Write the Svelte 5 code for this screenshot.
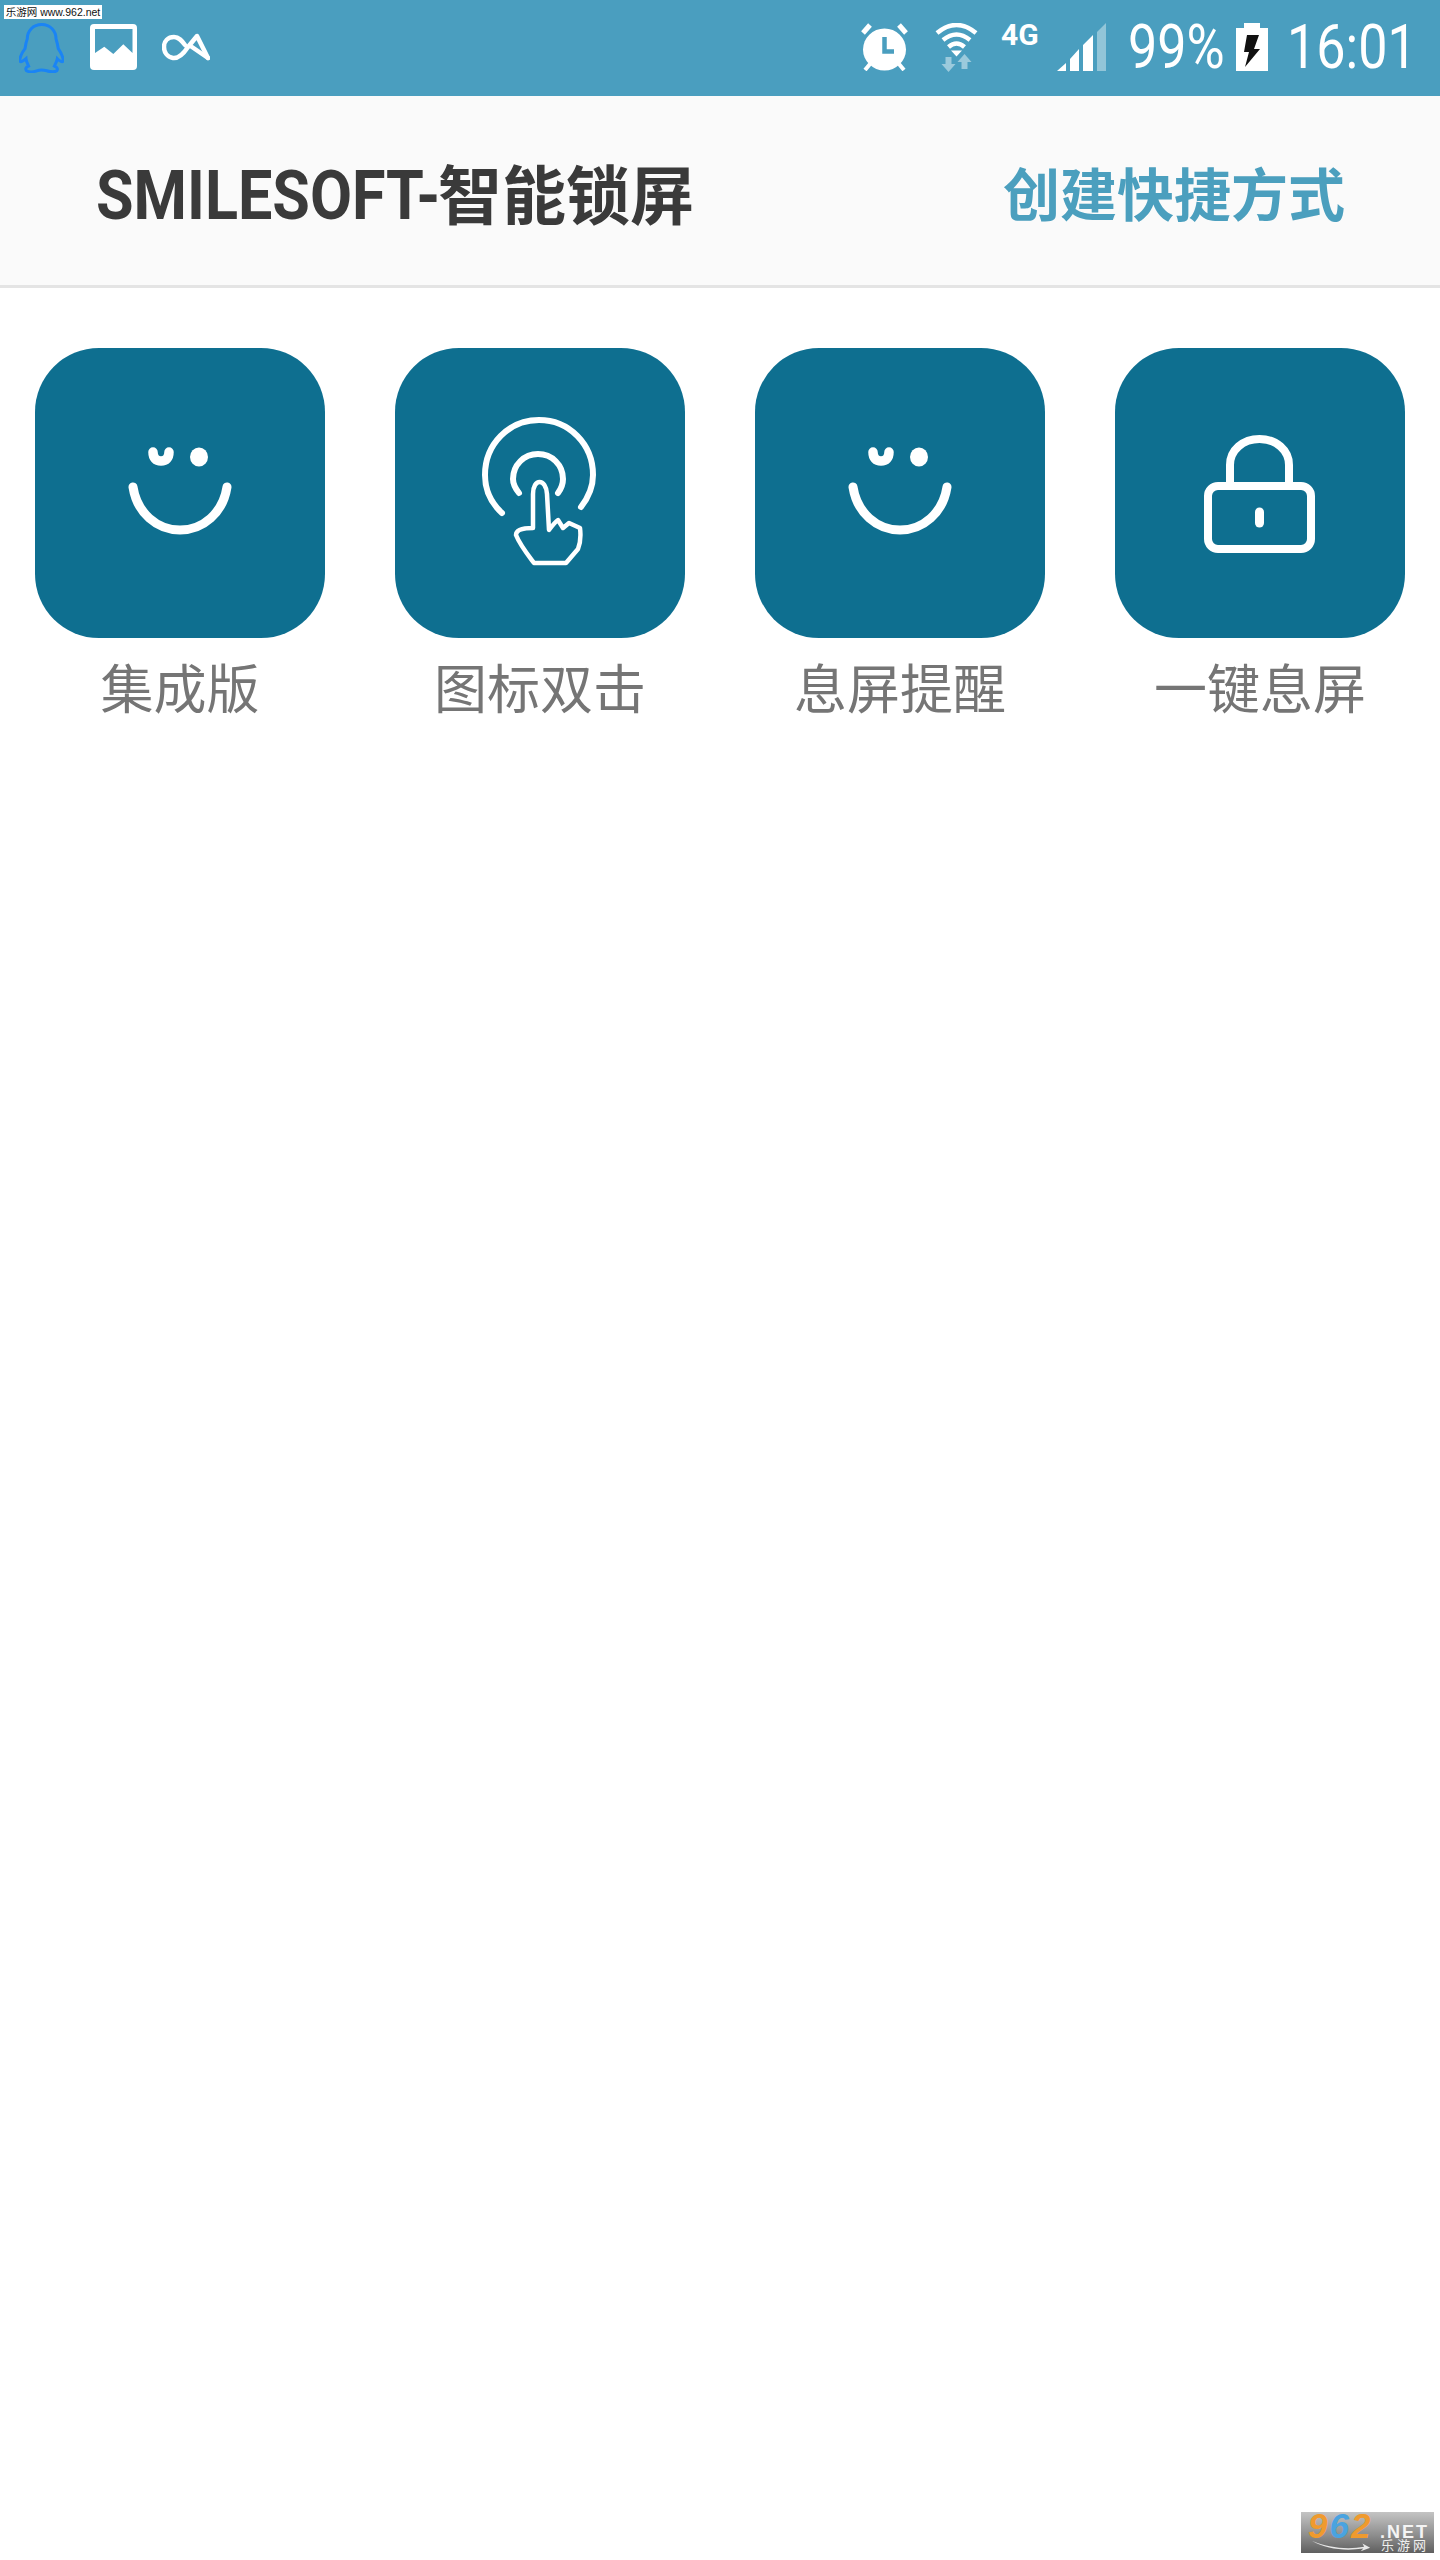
<script lang="ts">
  const tools = [
    { key: 'smile', label: '集成版' },
    { key: 'touch', label: '图标双击' },
    { key: 'smile', label: '息屏提醒' },
    { key: 'lock', label: '一键息屏' }
  ];
</script>

<div class="screen">
  <div class="status-bar">
    <div class="status-left">
      <svg class="qq" viewBox="0 0 45 50" width="45" height="50">
        <path d="M22.7 1.5C14 1.5 8.3 8 8.3 15.7C7 19 6.5 22 6 25.7C3.5 29 1 33 .8 37.5C1 40 4.5 38 7 35.7C7.2 38.5 8.5 41 9.5 43C7 44 6 46 7.5 47.8C10 49.3 15 48.8 17.7 47.8C20 47 25 47 27.7 47.8C31 48.8 35.5 49.3 37.8 47.8C39.2 46 38 44 35.5 43C36.5 41 37.8 38.5 38.3 35.7C40.5 38 44 40 44.3 37.5C44 33 41.5 29 39.3 25.7C38.8 22 38 19 37 15.7C37 8 31.4 1.5 22.7 1.5Z" fill="none" stroke="#1a84f5" stroke-width="3" />
      </svg>
      <svg class="picture" viewBox="0 0 47 46" width="47" height="46">
        <rect width="47" height="46" rx="4" fill="#fff" />
        <path d="M5 29L14.3 22.7L23.3 30L33.3 20.3L42.5 29V5H5Z" fill="#4a9ebf" />
      </svg>
      <svg class="ca" viewBox="0 0 48 28" width="48" height="28">
        <path d="M46 25L35 3L26 14C20 23 15 25.5 11 25C5 24 2 19 2 14C2 8 6 4 12 4C17 4 20 8 23 12" fill="none" stroke="#fff" stroke-width="4.5" stroke-linecap="round" stroke-linejoin="round" />
        <path d="M30 14L46 25" fill="none" stroke="#fff" stroke-width="4.5" stroke-linecap="round" />
      </svg>
    </div>
    <div class="status-right">
      <svg class="alarm" viewBox="0 0 47 48" width="47" height="48">
        <ellipse cx="23.5" cy="26.5" rx="21.5" ry="21" fill="#fff" />
        <path d="M2 10L9 2M45 10L38 2" stroke="#fff" stroke-width="5" />
        <path d="M4 47L9 41M43 47L38 41" stroke="#fff" stroke-width="4" />
        <path d="M23.5 14V28.5H33" fill="none" stroke="#4a9ebf" stroke-width="4.5" />
      </svg>
      <svg class="wifi" viewBox="0 0 43 49" width="43" height="49">
        <path d="M2 10Q21.5 -6 41 10M8 17Q21.5 6 35 17M13.5 24Q21.5 17 29.5 24" fill="none" stroke="#fff" stroke-width="4.5" />
        <path d="M16 27.5H27L21.5 33.5Z" fill="#fff" />
        <path d="M10.5 34H16.5V41H20.5L13.5 49L6.5 41H10.5ZM29.5 31L36.5 39H32.5V46H26.5V39H22.5Z" fill="#fff" opacity=".45" />
      </svg>
      <span class="net">4G</span>
      <svg class="signal" viewBox="0 0 49 48" width="49" height="48">
        <path d="M0 48L9 40V48ZM13 48V36L22 26V48ZM26 48V22L36 12V48Z" fill="#fff" />
        <path d="M40 48V9L49 0V48Z" fill="#fff" opacity=".4" />
      </svg>
      <span class="battery-text"><span>99%</span></span>
      <svg class="battery" viewBox="0 0 32 48" width="32" height="48">
        <path d="M8 0H24V5H32V48H0V5H8Z" fill="#fff" />
        <path d="M11 12H23L18 26H24L9 44L13 29H8Z" fill="#111" />
      </svg>
      <span class="clock"><span>16:01</span></span>
    </div>
    <div class="site-tag">乐游网 www.962.net</div>
  </div>

  <header class="app-header">
    <h1><span class="brand">SMILESOFT-</span>智能锁屏</h1>
    <span class="shortcut">创建快捷方式</span>
  </header>

  <div class="tool-grid">
    {#each tools as tool}
      <div class="tool">
        <div class="tile">
          <svg viewBox="0 0 290 290" width="290" height="290">
            {#if tool.key === 'smile'}
              <path d="M98 139C102 165 122 182 145 182C168 182 188 165 192 139" fill="none" stroke="#fff" stroke-width="9" stroke-linecap="round" />
              <path d="M118 104C118 110 121 113 126 113C131 113 134 110 134 104" fill="none" stroke="#fff" stroke-width="9.5" stroke-linecap="round" />
              <ellipse cx="164" cy="109" rx="9" ry="9.5" fill="#fff" />
            {:else if tool.key === 'touch'}
              <path d="M107 165C96 155 90 142 90 127C90 96 114 72 144 72C174 72 198 96 198 127C198 139 193 150 186 159" fill="none" stroke="#fff" stroke-width="6" stroke-linecap="round" />
              <path d="M124 145C120 140 118 136 118 131C118 117 129 106 143 106C157 106 168 117 168 131C168 136 166 141 163 145" fill="none" stroke="#fff" stroke-width="6" stroke-linecap="round" />
              <path d="M138 180V146C138 130 151 130 152 146L154 182C157 178 160 174 163 172L168 180L174 175L185 180C186 188 185 196 183 201L171 215H139C133 207 125 197 121 187C121 182 128 180 138 180Z" fill="none" stroke="#fff" stroke-width="4.5" stroke-linejoin="round" />
            {:else}
              <rect x="93" y="138" width="103" height="63" rx="10" fill="none" stroke="#fff" stroke-width="8" />
              <path d="M115 136V117C115 102 128 91 144.5 91C161 91 174 102 174 117V136" fill="none" stroke="#fff" stroke-width="8" />
              <path d="M144.5 164V175" stroke="#fff" stroke-width="9" stroke-linecap="round" />
            {/if}
          </svg>
        </div>
        <span class="tool-label">{tool.label}</span>
      </div>
    {/each}
  </div>

  <div class="corner-mark">
    <div class="mark-top"><span class="mark-num"><span class="o">9</span><span class="b">6</span><span class="o">2</span></span><span class="mark-net">.NET</span></div>
    <div class="mark-cn">乐游网</div>
    <svg class="swoosh" viewBox="0 0 70 14" width="66" height="12">
      <path d="M1 1C20 10 45 11 62 8L60 4L69 9L58 13L61 10C40 13 18 11 1 1Z" fill="#e8e8e8" />
    </svg>
  </div>
</div>

<style>
  :global(body) {
    background: #fff;
  }

  .screen {
    position: relative;
    min-height: 2560px;
    background: #fff;
    font-family: Roboto, "Noto Sans CJK SC", sans-serif;
    overflow: hidden;
  }

  .status-bar {
    position: relative;
    display: flex;
    justify-content: space-between;
    align-items: center;
    height: 96px;
    padding: 0 31px 2px 19px;
    box-sizing: border-box;
    background: #4a9ebf;
    color: #fff;
  }

  .status-left,
  .status-right {
    display: flex;
    align-items: center;
  }

  svg {
    display: block;
    flex: none;
  }

  .qq {
    margin-top: 1px;
  }

  .picture {
    margin-left: 26px;
  }

  .ca {
    margin-left: 25px;
  }

  .wifi {
    margin-left: 27px;
  }

  .net {
    width: 38px;
    margin-left: 23px;
    margin-top: -24px;
    font-size: 30px;
    font-weight: 700;
    line-height: 22px;
    white-space: nowrap;
  }

  .signal {
    margin-left: 18px;
  }

  .battery-text,
  .clock {
    display: block;
    height: 60px;
    font-size: 62px;
    font-weight: 400;
    line-height: 60px;
    white-space: nowrap;
  }

  .battery-text span,
  .clock span {
    display: inline-block;
    transform: scaleX(0.84);
    transform-origin: left center;
  }

  .battery-text {
    width: 95px;
    margin-left: 22px;
  }

  .battery {
    margin-left: 13px;
  }

  .clock {
    width: 122px;
    margin-left: 19px;
  }

  .site-tag {
    position: absolute;
    left: 4px;
    top: 5px;
    width: 98px;
    height: 14px;
    background: #fff;
    color: #111;
    font-family: "Liberation Sans", "Noto Sans CJK SC", sans-serif;
    font-size: 10.5px;
    line-height: 14px;
    white-space: nowrap;
    text-align: center;
  }

  .app-header {
    display: flex;
    justify-content: space-between;
    align-items: center;
    height: 192px;
    padding: 0 95px 0 96px;
    box-sizing: border-box;
    background: #fafafa;
    border-bottom: 3px solid #e4e4e4;
  }

  h1 {
    margin: 0;
    font-size: 64px;
    font-weight: 700;
    color: #3a3a3a;
    white-space: nowrap;
  }

  /* condensed latin, the installed Roboto has no narrow cut */
  .brand {
    display: inline-block;
    width: 342px;
    font-size: 69px;
    transform: scaleX(0.885);
    transform-origin: left center;
  }

  .shortcut {
    font-size: 57px;
    font-weight: 700;
    color: #4b9fbe;
    white-space: nowrap;
  }

  .tool-grid {
    display: flex;
    justify-content: space-between;
    padding: 60px 35px 0;
  }

  .tool {
    display: flex;
    flex-direction: column;
    align-items: center;
    width: 290px;
  }

  .tile {
    width: 290px;
    height: 290px;
    border-radius: 64px;
    background: #0e6f90;
  }

  .tool-label {
    margin-top: 21px;
    font-size: 53px;
    font-weight: 400;
    line-height: 64px;
    color: #757575;
    white-space: nowrap;
  }

  .corner-mark {
    position: absolute;
    left: 1301px;
    top: 2512px;
    width: 133px;
    height: 41px;
    background: linear-gradient(#c4c4c4, #8f8f8f 55%, #5f5f5f);
    font-family: "Liberation Sans", "Noto Sans CJK SC", sans-serif;
  }

  .mark-top {
    display: flex;
    align-items: baseline;
    padding-left: 7px;
    height: 27px;
    line-height: 28px;
  }

  .mark-num {
    width: 72px;
    font-size: 35px;
    font-weight: 700;
    font-style: italic;
    letter-spacing: 2px;
    white-space: nowrap;
  }

  .o {
    color: #ef9a2e;
  }

  .b {
    color: #4aa3e0;
  }

  .mark-net {
    font-size: 18px;
    font-weight: 700;
    color: #f4f4f4;
    letter-spacing: 2px;
    white-space: nowrap;
  }

  .mark-cn {
    position: absolute;
    right: 5px;
    bottom: 0;
    font-size: 13px;
    letter-spacing: 3px;
    line-height: 14px;
    color: #f0f0f0;
  }

  .swoosh {
    position: absolute;
    left: 7px;
    bottom: 1px;
  }
</style>
